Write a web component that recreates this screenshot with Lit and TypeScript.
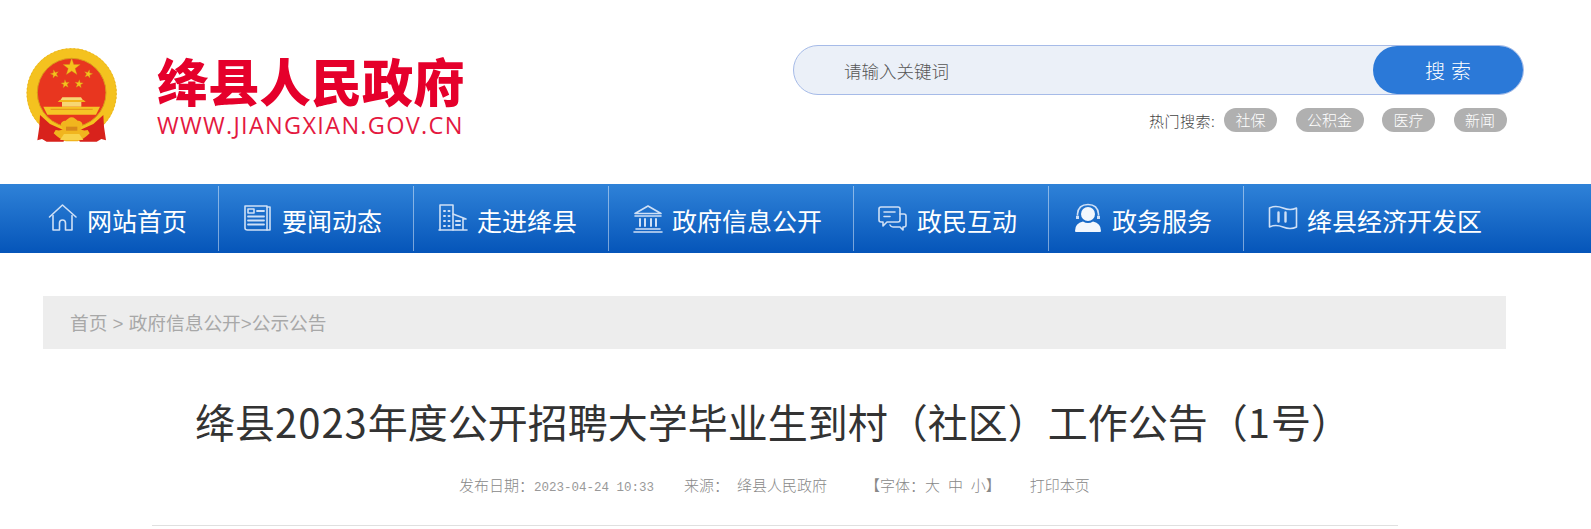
import { LitElement, html, css, svg } from "lit";
import { customElement } from "lit/decorators.js";

const star = (cx: number, cy: number, r: number, rot = 0) => {
  const pts: string[] = [];
  for (let i = 0; i < 10; i++) {
    const rad = i % 2 === 0 ? r : r * 0.4;
    const a = -Math.PI / 2 + (i * Math.PI) / 5 + rot;
    pts.push(`${(cx + rad * Math.cos(a)).toFixed(1)},${(cy + rad * Math.sin(a)).toFixed(1)}`);
  }
  return svg`<polygon points=${pts.join(" ")} fill="#f6c21c" stroke="#c9961a" stroke-width="1"/>`;
};

const emblem = html`<svg class="emblem" width="110" height="110" viewBox="0 0 330 330">
  <circle cx="155" cy="160" r="135" fill="#f4c21f"/>
  <circle cx="155" cy="160" r="134" fill="none" stroke="#eab21c" stroke-width="3" stroke-dasharray="5 7"/>
  <circle cx="155" cy="158" r="103" fill="#e8361f"/>
  <circle cx="155" cy="158" r="103" fill="none" stroke="#d99a1c" stroke-width="3"/>
  ${star(155, 82, 27)}
  ${star(104, 102, 13, -0.25)}
  ${star(205, 102, 13, 0.25)}
  ${star(136, 132, 13, -0.1)}
  ${star(177, 132, 13, 0.1)}
  <path d="M127 172h56l8 12h-7v16h-58v-16h-7z" fill="#f7d774"/>
  <path d="M113 186h84l-6-6h-72z" fill="#f3b51c"/>
  <path d="M70 200h170l-12 24H82z" fill="#f6c426"/>
  <path d="M92 206h126v4H92z" fill="#e89a1a"/>
  <path d="M60 225L90 252 130 270 155 280 130 305H80L66 297 52 301 58 260z" fill="#d8221c"/>
  <path d="M250 225L220 252 180 270 155 280 180 305H230L244 297 258 301 252 260z" fill="#d8221c"/>
  <path d="M155 232c8 0 12 6 18 10 8 0 16 6 14 14l-6 12c6 4 14 4 22 2l6 10c-12 12-24 20-36 24h-36c-12-4-24-12-36-24l6-10c8 2 16 2 22-2l-6-12c-2-8 6-14 14-14 6-4 10-10 18-10z" fill="#f1b51e"/>
  <path d="M132 282h46l12 18h-70z" fill="#f8d24a"/>
  <path d="M138 260h34v12h-34z" fill="#d8881a"/>
</svg>`;

const I = (body: unknown) => html`<svg class="ico" width="30" height="30" viewBox="0 0 30 30" fill="none" stroke="#cfe0f6" stroke-width="1.6" stroke-linejoin="round" stroke-linecap="round">${body}</svg>`;

const icons = {
  home: I(svg`<path d="M1.500 14L14.500 2 28 14"/><path d="M5 12.500V27h6.500v-7q0-3 3-3t3 3v7H24V12.500"/>`),
  news: I(svg`<path d="M2 3h22v24H4.500Q2 27 2 25z"/><path d="M24 4h3v23h-3"/><rect x="5" y="6" width="6" height="4"/><path d="M14 8h7M5 13.500h16M5 17.500h16M5 21.500h16" stroke-width="1.800"/>`),
  building: I(svg`<path d="M2 27V2h13v25"/><path d="M15 11l13 5h-3v11M1 27h28"/><path d="M6 8h1M10.500 8h1M6 13h1M10.500 13h1M6 18h1M10.500 18h1M6 23h1M10.500 23h1M18 18h4M18 22h4" stroke-width="2"/>`),
  bank: I(svg`<path d="M2 10.500L15 3l13 7.500z"/><path d="M2 13h26M3 26h24M1 29h28" /><path d="M7 16v7M12 16v7M18 16v7M23 16v7" stroke-width="2"/>`),
  chat: I(svg`<path d="M3 4h17q2 0 2 2v11q0 2-2 2H9l-4 4v-4H3q-2 0-2-2V6q0-2 2-2z"/><path d="M6 9h11M6 13.500h6"/><path d="M22 11h4q2 0 2 2v9q0 2-2 2h-1v3l-3-3h-7q-2 0-3-2"/>`),
  user: html`<svg class="ico" width="30" height="30" viewBox="0 0 30 30" fill="none">
    <circle cx="15" cy="11" r="7" fill="#f2f7fd"/>
    <path d="M4.500 12V11C5 5 9 1.500 15 1.500S25 5 25.500 11v1" stroke="#cfe0f6" stroke-width="1.600"/>
    <path d="M3 13a2 2 0 0 1 3 0v3H3zM24 13a2 2 0 0 1 3 0v3h-3z" fill="#cfe0f6"/>
    <path d="M2 28q0-8 8-9.500 5 3 10 0 8 1.500 8 9.500q0 1-1 1H3q-1 0-1-1z" fill="#f2f7fd"/>
  </svg>`,
  map: I(svg`<path d="M1.500 5q6-3 13.500 0t13.500 0v19q-6 3-13.500 0T1.500 24z"/><path d="M10.500 9.500v9M17.500 9.500v9" stroke-width="2.400"/>`),
};

const navItems = [
  { label: "网站首页", icon: icons.home },
  { label: "要闻动态", icon: icons.news },
  { label: "走进绛县", icon: icons.building },
  { label: "政府信息公开", icon: icons.bank, wide: true },
  { label: "政民互动", icon: icons.chat },
  { label: "政务服务", icon: icons.user },
  { label: "绛县经济开发区", icon: icons.map, last: true },
];

@customElement("app-root")
export class AppRoot extends LitElement {
  static styles = css`
    :host {
      display: block;
      width: 1591px;
      height: 529px;
      overflow: hidden;
      background: #fff;
      font-family: "Liberation Sans", "Noto Sans CJK SC", sans-serif;
    }
    .header {
      height: 184px;
      display: flex;
      justify-content: space-between;
      box-sizing: border-box;
    }
    .logo {
      display: flex;
      padding: 40px 0 0 20px;
      align-items: flex-start;
    }
    .logo-text {
      margin: 11px 0 0 27px;
      color: #e5002b;
    }
    .logo-cn {
      font-family: "Noto Sans CJK SC", sans-serif;
      font-size: 51.250px;
      line-height: 58px;
      font-weight: 900;
      white-space: nowrap;
    }
    .logo-url {
      font-family: "Open Sans", sans-serif;
      font-size: 23.500px;
      line-height: 24px;
      letter-spacing: 1.300px;
      margin-top: 4px;
      white-space: nowrap;
      color: #e4193f;
    }
    .search-area {
      width: 731px;
      margin-right: 67px;
      padding-top: 45px;
    }
    .search {
      height: 50px;
      box-sizing: border-box;
      display: flex;
      align-items: center;
      justify-content: space-between;
      border: 1px solid #a6bbe8;
      border-radius: 25px;
      background: #ebf0f8;
    }
    .ph {
      margin-left: 50px;
      font-family: "Noto Sans CJK SC", sans-serif;
      font-weight: 300;
      font-size: 17.500px;
      color: #555;
    }
    .btn {
      width: 150px;
      height: 48px;
      border-radius: 24px;
      background: #2b79d8;
      color: #fff;
      font-family: "Noto Sans CJK SC", sans-serif;
      font-weight: 300;
      font-size: 20px;
      display: flex;
      align-items: center;
      justify-content: center;
      gap: 6px;
    }
    .hot {
      display: flex;
      align-items: center;
      margin-top: 13px;
      padding-left: 356px;
      font-family: "Noto Sans CJK SC", sans-serif;
      font-weight: 300;
      font-size: 15px;
      color: #444;
    }
    .hot .lbl { width: 75px; white-space: nowrap; letter-spacing: 0.500px; }
    .chip {
      height: 24px;
      line-height: 24px;
      border-radius: 12px;
      background: #b0b0b0;
      color: #fff;
      text-align: center;
      padding: 0 11.500px;
    }
    .chip + .chip { margin-left: 18.500px; }
    nav {
      height: 69px;
      box-sizing: border-box;
      padding-left: 24px;
      display: flex;
      background: linear-gradient(#2f82d8, #0555b9);
    }
    .item {
      width: 195px;
      box-sizing: border-box;
      flex: none;
      margin: 2px 0;
      border-right: 1px solid rgba(255, 255, 255, 0.45);
      padding: 3px 0 0 24px;
      display: flex;
      align-items: center;
      gap: 9px;
      color: #fff;
      font-family: "Noto Sans CJK SC", sans-serif;
      font-weight: 400;
      font-size: 25px;
      white-space: nowrap;
    }
    .item.wide { width: 245px; }
    .item.last { border-right: 0; }
    .ico { flex: none; margin-top: -4px; }
    .crumb {
      margin: 43px 85px 0 43px;
      height: 53px;
      box-sizing: border-box;
      padding-left: 27px;
      background: #ededed;
      color: #a8a8a8;
      font-size: 18.700px;
      font-weight: 400;
      line-height: 55px;
    }
    h1 {
      margin: 44px 0 0 150px;
      text-align: center;
      width: 1246px;
      font-family: "Noto Sans CJK SC", sans-serif;
      font-size: 40px;
      line-height: 56px;
      font-weight: 400;
      color: #333;
      white-space: nowrap;
    }
    h1 span { letter-spacing: 1px; }
    .meta {
      margin: 25px 0 0 459px;
      height: 24px;
      display: flex;
      align-items: baseline;
      font-family: "Noto Sans CJK SC", sans-serif;
      font-weight: 300;
      font-size: 15px;
      color: #888;
      white-space: pre;
    }
    .mono { font-family: "Liberation Mono", monospace; font-size: 12.500px; color: #999; }
    .meta .src { margin-left: 30px; }
    .meta .org { margin-left: 8px; }
    .meta .font { margin-left: 38px; word-spacing: 4.500px; }
    .meta .print { margin-left: 29px; }
    .rule {
      margin: 27px 0 0 152px;
      width: 1246px;
      border-top: 1px solid #e0e0e0;
    }
  `;

  render() {
    return html`
      <div class="header">
        <div class="logo">
          ${emblem}
          <div class="logo-text">
            <div class="logo-cn">绛县人民政府</div>
            <div class="logo-url">WWW.JIANGXIAN.GOV.CN</div>
          </div>
        </div>
        <div class="search-area">
          <div class="search">
            <span class="ph">请输入关键词</span>
            <div class="btn"><span>搜</span><span>索</span></div>
          </div>
          <div class="hot">
            <span class="lbl">热门搜索:</span>
            ${["社保", "公积金", "医疗", "新闻"].map((t) => html`<span class="chip">${t}</span>`)}
          </div>
        </div>
      </div>
      <nav>
        ${navItems.map(
          (n) => html`<div class="item ${n.wide ? "wide" : ""} ${n.last ? "last" : ""}">${n.icon}<span>${n.label}</span></div>`
        )}
      </nav>
      <div class="crumb">首页 &gt; 政府信息公开&gt;公示公告</div>
      <h1>绛县<span>2023</span>年度公开招聘大学毕业生到村（社区）工作公告（<span>1</span>号）</h1>
      <div class="meta">
        <span>发布日期：</span><span class="mono">2023-04-24 10:33</span>
        <span class="src">来源：</span><span class="org">绛县人民政府</span>
        <span class="font">【字体：大 中 小】</span>
        <span class="print">打印本页</span>
      </div>
      <div class="rule"></div>
    `;
  }
}
